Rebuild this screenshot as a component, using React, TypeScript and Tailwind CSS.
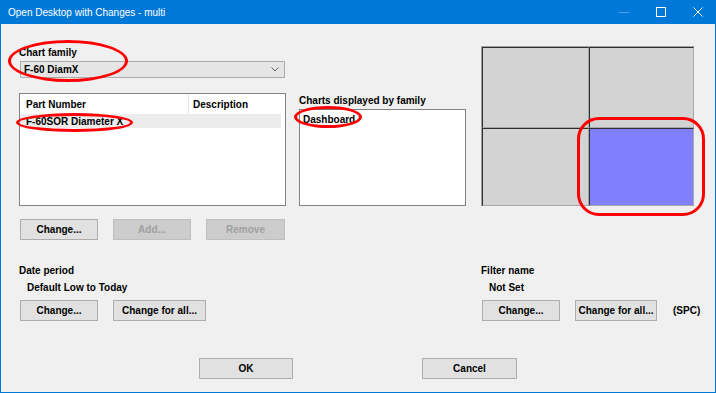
import React from 'react';

function Btn({ label, w, disabled }: { label: string; w: string; disabled?: boolean }) {
  return (
    <div
      className={
        'h-[21px] flex items-center justify-center border text-[10px] font-bold ' +
        w +
        (disabled
          ? ' bg-[#cccccc] border-[#bfbfbf] text-[#a0a0a0]'
          : ' bg-[#e1e1e1] border-[#adadad] text-black')
      }
    >
      {label}
    </div>
  );
}

function TitleBar() {
  return (
    <div className="h-[24px] flex items-center text-white">
      <span className="pl-[8px] text-[10px] font-['Liberation_Sans',sans-serif]">Open Desktop with Changes - multi</span>
      <div className="ml-auto flex items-center h-full">
        {/* minimize (disabled) */}
        <div className="w-[37px] h-full flex items-center justify-center">
          <div className="w-[10px] h-px bg-[#4d9fe6]" />
        </div>
        {/* maximize */}
        <div className="w-[37px] h-full flex items-center justify-center">
          <div className="w-[10px] h-[10px] border border-white" />
        </div>
        {/* close */}
        <div className="w-[37px] h-full flex items-center justify-center">
          <svg width="10" height="10" viewBox="0 0 10 10">
            <path d="M0.5 0.5 L9.5 9.5 M9.5 0.5 L0.5 9.5" stroke="white" strokeWidth="1" />
          </svg>
        </div>
      </div>
    </div>
  );
}

function Preview() {
  const cell = 'border-t border-l border-t-[#2e2e2e] border-l-[#2e2e2e] border-r border-b border-r-[#a8a8a8] border-b-[#a8a8a8]';
  return (
    <div className="ml-[15px] w-[213px] h-[160px] border-t border-l border-[#a0a0a0] grid grid-cols-[107px_1fr] grid-rows-[81px_1fr]">
      <div className={cell + ' bg-[#d3d3d3]'} />
      <div className={cell + ' bg-[#d3d3d3]'} />
      <div className={cell + ' bg-[#d3d3d3]'} />
      <div className={cell + ' bg-[#8080ff]'} />
    </div>
  );
}

export default function App() {
  return (
    <div className="relative w-[716px] h-[393px] bg-[#0078d7] flex flex-col font-['Liberation_Sans',Arial,sans-serif] text-black leading-[13px]">
      <TitleBar />
      <div className="flex-1 mx-px mb-px bg-[#f0f0f0] text-[10px] font-bold">
        {/* top section */}
        <div className="flex pt-[22px] pl-[18px]">
          {/* left column */}
          <div className="w-[267px] flex flex-col">
            <div className="h-[13px]">Chart family</div>
            <div className="mt-[2px] ml-px w-[265px] h-[17px] bg-[#e5e5e5] border border-[#acacac] flex items-center pl-[3px] pr-[5px]">
              <span>F-60 DiamX</span>
              <svg className="ml-auto" width="8" height="5" viewBox="0 0 8 5">
                <path d="M0.5 0.5 L4 4 L7.5 0.5" stroke="#606060" fill="none" strokeWidth="1" />
              </svg>
            </div>
            <div className="mt-[15px] h-[113px] border border-[#828282] bg-white flex flex-col">
              <div className="h-[20px] flex mr-[4px]">
                <div className="w-[169px] border-r border-[#e5e5e5] pl-[6px] flex items-center">Part Number</div>
                <div className="flex-1 pl-[4px] flex items-center">Description</div>
              </div>
              <div className="h-[14px] mr-[4px] bg-[#ececec] pl-[6px] flex items-center">F-60SOR Diameter X</div>
            </div>
            <div className="mt-[13px] flex pl-px gap-[15px]">
              <Btn label="Change..." w="w-[78px]" />
              <Btn label="Add..." w="w-[78px]" disabled />
              <Btn label="Remove" w="w-[79px]" disabled />
            </div>
          </div>

          {/* middle column */}
          <div className="ml-[13px] w-[167px] flex flex-col">
            <div className="mt-[48px] h-[13px]">Charts displayed by family</div>
            <div className="mt-[2px] h-[97px] border border-[#828282] bg-white pl-[3px] pt-[3px]">
              <div className="h-[13px]">Dashboard</div>
            </div>
          </div>

          <Preview />
        </div>

        {/* bottom section */}
        <div className="flex mt-[24px] pl-[18px]">
          <div className="w-[462px] flex flex-col">
            <div className="h-[13px]">Date period</div>
            <div className="mt-[4px] h-[13px] pl-[8px]">Default Low to Today</div>
            <div className="mt-[6px] flex pl-px gap-[15px]">
              <Btn label="Change..." w="w-[78px]" />
              <Btn label="Change for all..." w="w-[93px]" />
            </div>
          </div>
          <div className="flex flex-col">
            <div className="h-[13px]">Filter name</div>
            <div className="mt-[4px] h-[13px] pl-[8px]">Not Set</div>
            <div className="mt-[6px] flex items-center pl-px">
              <Btn label="Change..." w="w-[78px]" />
              <div className="ml-[15px]">
                <Btn label="Change for all..." w="w-[82px]" />
              </div>
              <span className="ml-[16px]">(SPC)</span>
            </div>
          </div>
        </div>

        <div className="flex mt-[37px] pl-[198px] gap-[129px]">
          <Btn label="OK" w="w-[94px]" />
          <Btn label="Cancel" w="w-[95px]" />
        </div>
      </div>

      {/* red annotation rings */}
      <div className="absolute left-[8px] top-[40px] w-[120px] h-[42px] border-[3px] border-[#ff0000] rounded-[50%]" />
      <div className="absolute left-[16px] top-[113px] w-[117px] h-[19px] border-[3px] border-[#ff0000] rounded-[50%]" />
      <div className="absolute left-[294px] top-[106px] w-[68px] h-[22px] border-[3px] border-[#ff0000] rounded-[50%]" />
      <div className="absolute left-[577px] top-[117px] w-[128px] h-[99px] border-[3px] border-[#ff0000] rounded-[22px]" />
    </div>
  );
}
